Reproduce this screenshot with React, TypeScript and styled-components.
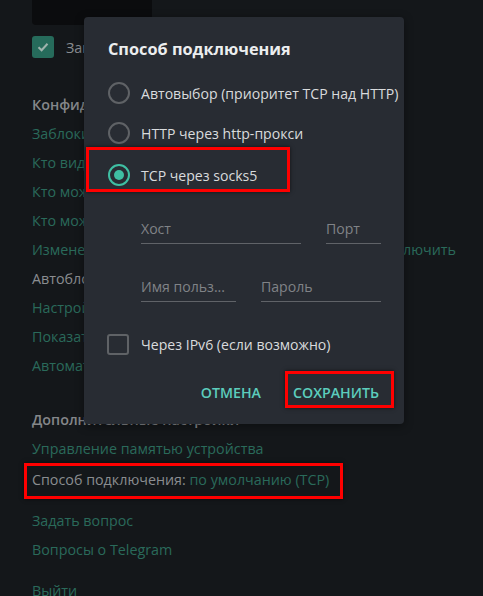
import React from "react";
import styled, { createGlobalStyle } from "styled-components";

const Global = createGlobalStyle`
  html, body {
    margin: 0;
    padding: 0;
    background: #14171a;
  }
  body {
    font-family: "Open Sans", "Noto Sans", sans-serif;
  }
`;

const Page = styled.div`
  position: relative;
  width: 483px;
  height: 596px;
  overflow: hidden;
  background: #14171a;
  padding-left: 32px;
  box-sizing: border-box;
`;

const TopBlock = styled.div`
  width: 120px;
  height: 25px;
  background: #0b0c0e;
  border-radius: 0 0 4px 4px;
`;

const CheckRow = styled.div`
  display: flex;
  align-items: center;
  gap: 12px;
  margin-top: 11px;
  height: 22px;
  color: #8a8d90;
  font-size: 14.3px;
`;

const GreenBox = styled.div`
  width: 22px;
  height: 22px;
  border-radius: 3px;
  background: #266b5b;
  display: flex;
  align-items: center;
  justify-content: center;
`;

const Heading = styled.div<{ $top: number }>`
  margin-top: ${(p) => p.$top}px;
  height: 29px;
  line-height: 29px;
  font-size: 14.3px;
  font-weight: 600;
  color: #85878a;
`;

const Item = styled.div<{ $plain?: boolean; $gap?: number }>`
  position: relative;
  height: 29px;
  line-height: 29px;
  font-size: 14.3px;
  color: ${(p) => (p.$plain ? "#8a8d90" : "#2a6a5a")};
  margin-top: ${(p) => p.$gap ?? 0}px;
  white-space: nowrap;
`;

const Tail = styled.span`
  position: absolute;
  left: 371px;
  color: #2a6a5a;
`;

const Value = styled.span`
  color: #2a6a5a;
`;

const Marked = styled.div`
  position: relative;
  margin-left: -8px;
  width: 319px;
  box-sizing: border-box;
  height: 36px;
  padding: 0 0 3px 5px;
  border: 3px solid #ff0000;
  display: flex;
  align-items: center;
  font-size: 14.3px;
  color: #8a8d90;
  white-space: nowrap;
  box-shadow: 0 0 4px rgba(0, 0, 0, 0.6);
`;

const Overlay = styled.div`
  position: absolute;
  inset: 0;
`;

const Dialog = styled.div`
  position: absolute;
  left: 84px;
  top: 17px;
  width: 320px;
  height: 407px;
  box-sizing: border-box;
  background: #282c33;
  border-radius: 4px;
  padding: 21px 0 0 24px;
  display: flex;
  flex-direction: column;
  box-shadow: 0 2px 10px rgba(0, 0, 0, 0.4);
`;

const Title = styled.div`
  font-size: 16.3px;
  font-weight: 700;
  color: #eceeef;
  height: 22px;
  line-height: 22px;
  margin-bottom: 13px;
`;

const Option = styled.div<{ $mark?: boolean }>`
  display: flex;
  align-items: center;
  gap: 11px;
  height: 40px;
  font-size: 14.1px;
  color: #d9dbdd;
  white-space: nowrap;
  box-sizing: border-box;
  ${(p) =>
    p.$mark &&
    `
    margin: -6px 0 0 -22px;
    padding: 11px 0 0 19px;
    width: 204px;
    height: 45px;
    border: 3px solid #ff0000;
    box-shadow: 0 0 4px rgba(0,0,0,0.6);
  `}
`;

const Radio = styled.span<{ $on?: boolean }>`
  width: 22px;
  height: 22px;
  box-sizing: border-box;
  border-radius: 50%;
  border: 2px solid ${(p) => (p.$on ? "#3fbfa3" : "#5f6266")};
  display: flex;
  align-items: center;
  justify-content: center;
  flex: none;
  &::after {
    content: "";
    display: ${(p) => (p.$on ? "block" : "none")};
    width: 10px;
    height: 10px;
    border-radius: 50%;
    background: #3fbfa3;
  }
`;

const Fields = styled.div<{ $top: number; $cols: string }>`
  display: grid;
  grid-template-columns: ${(p) => p.$cols};
  column-gap: 25px;
  margin: ${(p) => p.$top}px 0 0 33px;
`;

const Field = styled.div`
  height: 25px;
  line-height: 20px;
  box-sizing: border-box;
  border-bottom: 1px solid #606368;
  font-size: 14.1px;
  color: #808387;
  white-space: nowrap;
  overflow: hidden;
`;

const CheckLine = styled.div`
  display: flex;
  align-items: center;
  gap: 12px;
  margin: 32px 0 0 -1px;
  height: 21px;
  font-size: 14.1px;
  color: #d9dbdd;
`;

const EmptyBox = styled.span`
  width: 22px;
  height: 21px;
  box-sizing: border-box;
  border: 2px solid #5f6266;
  border-radius: 3px;
`;

const Actions = styled.div`
  display: flex;
  justify-content: flex-end;
  align-items: center;
  gap: 21px;
  margin: 16px 10px 0 0;
`;

const Btn = styled.div<{ $mark?: boolean }>`
  font-size: 14.2px;
  font-weight: 600;
  color: #5ccdbd;
  height: 37px;
  line-height: 25px;
  box-sizing: border-box;
  border: 3px solid ${(p) => (p.$mark ? "#ff0000" : "transparent")};
  padding: 6px ${(p) => (p.$mark ? 12 : 0)}px 0 5px;
  ${(p) => p.$mark && "box-shadow: 0 0 4px rgba(0,0,0,0.6);"}
`;

export default function App() {
  return (
    <Page>
      <Global />
      <TopBlock />
      <CheckRow>
        <GreenBox>
          <svg width="14" height="14" viewBox="0 0 14 14">
            <path d="M2.5 7.2 L5.6 10.2 L11.5 3.8" fill="none" stroke="#9fb3ad" strokeWidth="2" />
          </svg>
        </GreenBox>
        Закрыть вкладку
      </CheckRow>
      <Heading $top={32}>Конфиденциальность</Heading>
      <Item>Заблокированные пользователи</Item>
      <Item>Кто видит время последней активности</Item>
      <Item>Кто может звонить</Item>
      <Item>Кто может добавлять в группы</Item>
      <Item>
        Изменение настроек<Tail>лючить</Tail>
      </Item>
      <Item $plain>Автоблокировка</Item>
      <Item>Настройки паролей</Item>
      <Item>Показать все сеансы</Item>
      <Item>Автоматическое удаление</Item>
      <Heading $top={25}>Дополнительные настройки</Heading>
      <Item>Управление памятью устройства</Item>
      <Marked>
        Способ подключения:&nbsp;<Value>по умолчанию (TCP)</Value>
      </Marked>
      <Item $gap={7}>Задать вопрос</Item>
      <Item>Вопросы о Telegram</Item>
      <Item $gap={12}>Выйти</Item>

      <Overlay>
        <Dialog>
          <Title>Способ подключения</Title>
          <Option>
            <Radio />
            Автовыбор (приоритет TCP над HTTP)
          </Option>
          <Option>
            <Radio />
            HTTP через http-прокси
          </Option>
          <Option $mark>
            <Radio $on />
            TCP через socks5
          </Option>
          <Fields $top={27} $cols="160px 55px">
            <Field>Хост</Field>
            <Field>Порт</Field>
          </Fields>
          <Fields $top={33} $cols="95px 120px">
            <Field>Имя польз...</Field>
            <Field>Пароль</Field>
          </Fields>
          <CheckLine>
            <EmptyBox />
            Через IPv6 (если возможно)
          </CheckLine>
          <Actions>
            <Btn>ОТМЕНА</Btn>
            <Btn $mark>СОХРАНИТЬ</Btn>
          </Actions>
        </Dialog>
      </Overlay>
    </Page>
  );
}
